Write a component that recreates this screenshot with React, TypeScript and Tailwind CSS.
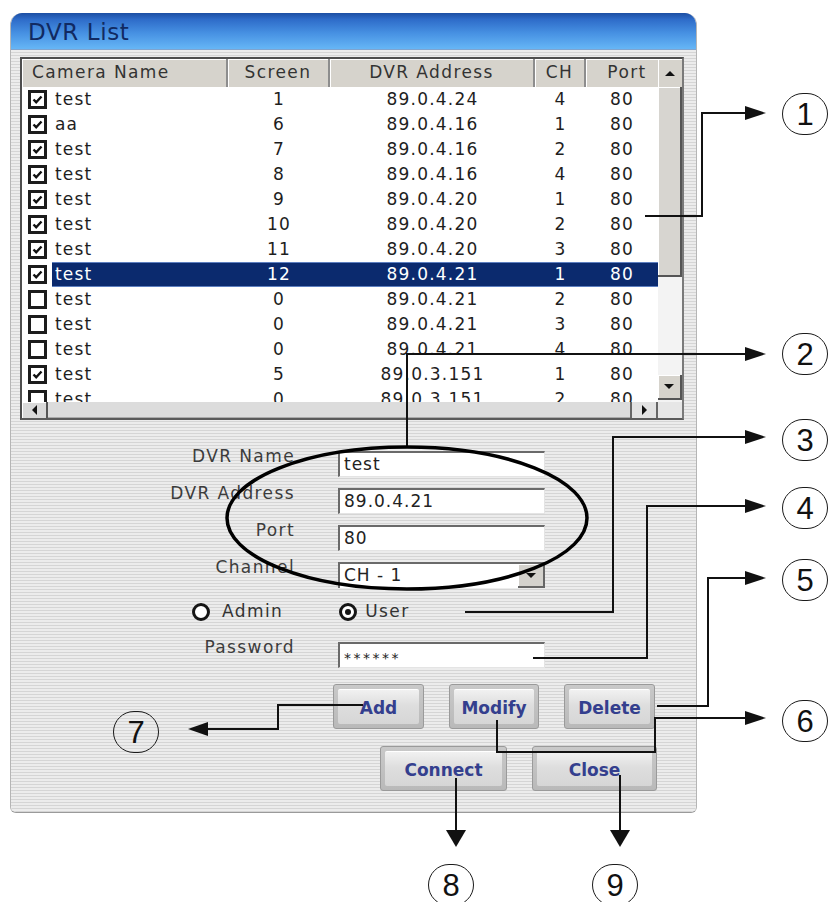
import React from 'react';

type Row = { on: boolean; name: string; screen: string; addr: string; ch: string; port: string };

const rows: Row[] = [
  { on: true, name: 'test', screen: '1', addr: '89.0.4.24', ch: '4', port: '80' },
  { on: true, name: 'aa', screen: '6', addr: '89.0.4.16', ch: '1', port: '80' },
  { on: true, name: 'test', screen: '7', addr: '89.0.4.16', ch: '2', port: '80' },
  { on: true, name: 'test', screen: '8', addr: '89.0.4.16', ch: '4', port: '80' },
  { on: true, name: 'test', screen: '9', addr: '89.0.4.20', ch: '1', port: '80' },
  { on: true, name: 'test', screen: '10', addr: '89.0.4.20', ch: '2', port: '80' },
  { on: true, name: 'test', screen: '11', addr: '89.0.4.20', ch: '3', port: '80' },
  { on: true, name: 'test', screen: '12', addr: '89.0.4.21', ch: '1', port: '80' },
  { on: false, name: 'test', screen: '0', addr: '89.0.4.21', ch: '2', port: '80' },
  { on: false, name: 'test', screen: '0', addr: '89.0.4.21', ch: '3', port: '80' },
  { on: false, name: 'test', screen: '0', addr: '89.0.4.21', ch: '4', port: '80' },
  { on: true, name: 'test', screen: '5', addr: '89.0.3.151', ch: '1', port: '80' },
  { on: false, name: 'test', screen: '0', addr: '89.0.3.151', ch: '2', port: '80' },
];

const SELECTED = 7;

// circled callout numbers, placed over the picture
const marks = [
  { n: '1', cls: 'left-[782px] top-[93px]' },
  { n: '2', cls: 'left-[782px] top-[333px]' },
  { n: '3', cls: 'left-[782px] top-[419px]' },
  { n: '4', cls: 'left-[782px] top-[487px]' },
  { n: '5', cls: 'left-[782px] top-[559px]' },
  { n: '6', cls: 'left-[782px] top-[700px]' },
  { n: '7', cls: 'left-[113px] top-[711px]' },
  { n: '8', cls: 'left-[428px] top-[864px]' },
  { n: '9', cls: 'left-[592px] top-[864px]' },
];

function Check({ on }: { on: boolean }) {
  return (
    <div className="w-[19px] h-[19px] border-[3px] border-[#1c1c1c] bg-white flex items-center justify-center">
      {on && (
        <svg width="11" height="11" viewBox="0 0 11 11">
          <polyline points="1.5,5.5 4.2,8.2 9.5,2.5" fill="none" stroke="#111" strokeWidth="2.4" />
        </svg>
      )}
    </div>
  );
}

function Arrow({ dir }: { dir: 'up' | 'down' | 'left' | 'right' }) {
  const pts = {
    up: '0,6 10,6 5,1',
    down: '0,1 10,1 5,6',
    left: '6,0 6,10 1,5',
    right: '1,0 1,10 6,5',
  }[dir];
  const vert = dir === 'up' || dir === 'down';
  return (
    <svg width={vert ? 10 : 7} height={vert ? 7 : 10} viewBox={vert ? '0 0 10 7' : '0 0 7 10'}>
      <polygon points={pts} fill="#111" />
    </svg>
  );
}

function Field({ label, children }: { label: string; children: React.ReactNode }) {
  return (
    <div className="flex h-[26px] items-start">
      <div className="w-[275px] text-right mt-[-6px] leading-[22px] text-[17px] tracking-[1.4px] text-[#3c3c3c]">{label}</div>
      <div className="ml-[43px]">{children}</div>
    </div>
  );
}

function Input({ value, small }: { value: string; small?: boolean }) {
  return (
    <div className={`w-[207px] h-[26px] bg-white border-t-2 border-l-2 border-t-[#6a6a6a] border-l-[#6a6a6a] border-b border-r border-b-[#e4e4e4] border-r-[#e4e4e4] pl-[4px] flex items-center text-[#222] ${small ? 'text-[14px] tracking-[2.5px] pt-[5px]' : 'text-[17px] tracking-[1px]'}`}>
      {value}
    </div>
  );
}

function Btn({ label, w }: { label: string; w: string }) {
  return (
    <div className={`${w} h-[45px] rounded-[3px] border border-[#9a9a9a] bg-[linear-gradient(180deg,#c9c9c9_0%,#b9b9b9_100%)] p-[4px]`}>
      <div className="w-full h-full rounded-[2px] bg-[linear-gradient(180deg,#f1f1f1_0%,#dedede_45%,#d6d6d6_100%)] border-t border-t-white flex items-center justify-center pt-[3px] text-[17px] font-bold text-[#343f8e] font-['DejaVu_Sans',sans-serif]">
        {label}
      </div>
    </div>
  );
}

export default function App() {
  return (
    <div className="relative w-[829px] h-[902px] bg-white overflow-hidden font-['DejaVu_Sans',sans-serif]">
      <div className="ml-[10px] mt-[13px] w-[687px] h-[800px] flex flex-col rounded-t-[12px] rounded-b-[6px] overflow-hidden border-x border-b border-x-[#b5b5b5] border-b-[#9a9a9a]">
        {/* title bar */}
        <div className="h-[37px] shrink-0 bg-[linear-gradient(180deg,#1d4fa3_0%,#2e6cc9_18%,#4690e2_55%,#66b6f6_100%)] border-b border-b-[#7fa4cf] pl-[17px] flex items-center">
          <span className="text-[23px] tracking-[0.6px] text-[#112a62] leading-none mt-[2px]">DVR List</span>
        </div>

        {/* body */}
        <div className="flex-1 flex flex-col pl-[9px] pt-[7px] bg-[repeating-linear-gradient(180deg,#ececec_0px,#ececec_2px,#d5d5d5_2px,#d5d5d5_3px)]">
          {/* list view */}
          <div className="w-[664px] h-[363px] border-2 border-t-[#4e4e4e] border-l-[#4e4e4e] border-r-[#7a7a7a] border-b-[#5a5a5a] flex flex-col bg-white">
            <div className="flex h-[343px]">
              <div className="w-[636px] flex flex-col">
                <div className="h-[28px] flex bg-[#d6d3cc] text-[17px] tracking-[1.4px] text-[#333]">
                  <div className="w-[206px] pl-[10px] flex items-center border-r-2 border-r-[#8d8d8d] shadow-[inset_1px_1px_0_#fff]">Camera Name</div>
                  <div className="w-[102px] flex items-center justify-center border-r-2 border-r-[#8d8d8d] shadow-[inset_1px_1px_0_#fff]">Screen</div>
                  <div className="w-[205px] flex items-center justify-center border-r-2 border-r-[#8d8d8d] shadow-[inset_1px_1px_0_#fff]">DVR Address</div>
                  <div className="w-[51px] flex items-center justify-center border-r-2 border-r-[#8d8d8d] shadow-[inset_1px_1px_0_#fff]">CH</div>
                  <div className="w-[72px] flex items-center justify-center pl-[10px] shadow-[inset_1px_1px_0_#fff]">Port</div>
                </div>
                <div className="h-[315px] overflow-hidden">
                  {rows.map((r, i) => {
                    const sel = i === SELECTED;
                    return (
                      <div key={i} className="h-[25px] flex items-center text-[17px] tracking-[1.2px]">
                        <div className="w-[30px] pl-[6px] flex items-center">
                          <Check on={r.on} />
                        </div>
                        <div className={`flex h-full items-center ${sel ? 'bg-[#0b2a6e] text-white border-y border-y-[#5d7fc0]' : 'text-[#1e1e1e]'}`}>
                          <div className="w-[176px] pl-[3px]">{r.name}</div>
                          <div className="w-[102px] text-center">{r.screen}</div>
                          <div className="w-[205px] text-center">{r.addr}</div>
                          <div className="w-[51px] text-center">{r.ch}</div>
                          <div className="w-[72px] text-center">{r.port}</div>
                        </div>
                      </div>
                    );
                  })}
                </div>
              </div>
              {/* vertical scrollbar */}
              <div className="w-[24px] flex flex-col bg-[#f3f3f3]">
                <div className="h-[28px] bg-[#d6d3cc] flex items-center justify-center shadow-[inset_1px_1px_0_#fff]">
                  <Arrow dir="up" />
                </div>
                <div className="h-[190px] bg-[#d7d5d0] border-r-2 border-b-2 border-r-[#555] border-b-[#555] shadow-[inset_1px_1px_0_#fff]" />
                <div className="flex-1" />
                <div className="h-[25px] mb-[2px] bg-[#d6d3cc] border-r-2 border-b-2 border-r-[#555] border-b-[#555] shadow-[inset_1px_1px_0_#fff] flex items-center justify-center">
                  <Arrow dir="down" />
                </div>
              </div>
            </div>
            {/* horizontal scrollbar */}
            <div className="h-[16px] flex bg-[#d9d9d9]">
              <div className="w-[26px] border-r-2 border-r-[#555] shadow-[inset_1px_1px_0_#fff] flex items-center justify-center">
                <Arrow dir="left" />
              </div>
              <div className="flex-1 bg-[#dcdcdc] border-b border-b-[#aaa]" />
              <div className="w-[28px] bg-[#e2e2e2] border-x-2 border-x-[#666] flex items-center justify-center">
                <Arrow dir="right" />
              </div>
              <div className="w-[24px] bg-[#e6e6e6]" />
            </div>
          </div>

          {/* form */}
          <div className="mt-[31px] flex flex-col gap-[11px]">
            <Field label="DVR Name">
              <Input value="test" />
            </Field>
            <Field label="DVR Address">
              <Input value="89.0.4.21" />
            </Field>
            <Field label="Port">
              <Input value="80" />
            </Field>
            <Field label="Channel">
              <div className="w-[207px] h-[26px] bg-white border-t-2 border-l-2 border-t-[#6a6a6a] border-l-[#6a6a6a] flex">
                <div className="flex-1 pl-[4px] flex items-center text-[17px] tracking-[1px] text-[#222]">CH - 1</div>
                <div className="w-[27px] bg-[#d4d2cd] border-r-2 border-b-2 border-r-[#666] border-b-[#666] shadow-[inset_1px_1px_0_#fff] flex items-center justify-center">
                  <Arrow dir="down" />
                </div>
              </div>
            </Field>
          </div>

          <div className="mt-[10px] h-[28px] flex items-center text-[17px] tracking-[1.4px] text-[#333]">
            <div className="ml-[172px] w-[18px] h-[18px] rounded-full border-[3px] border-[#151515] bg-white" />
            <span className="ml-[12px]">Admin</span>
            <div className="ml-[56px] w-[18px] h-[18px] rounded-full border-[3px] border-[#151515] bg-white flex items-center justify-center">
              <div className="w-[6px] h-[6px] rounded-full bg-[#151515]" />
            </div>
            <span className="ml-[8px]">User</span>
          </div>

          <div className="mt-[16px]">
            <Field label="Password">
              <Input value="******" small />
            </Field>
          </div>

          <div className="mt-[16px] ml-[313px] flex gap-[25px]">
            <Btn label="Add" w="w-[91px]" />
            <Btn label="Modify" w="w-[90px]" />
            <Btn label="Delete" w="w-[91px]" />
          </div>
          <div className="mt-[17px] ml-[360px] flex gap-[25px]">
            <Btn label="Connect" w="w-[127px]" />
            <Btn label="Close" w="w-[125px]" />
          </div>
        </div>
      </div>

      {/* annotation lines, oval and arrows drawn over the dialog */}
      <svg className="absolute left-0 top-0 pointer-events-none" width="829" height="902" viewBox="0 0 829 902">
        <g fill="none" stroke="#111" strokeWidth="2">
          <polyline points="645,216 702,216 702,113 750,113" />
          <polyline points="407,447 407,354 750,354" />
          <polyline points="465,612 613,612 613,437 750,437" />
          <polyline points="533,658 647,658 647,506 750,506" />
          <polyline points="657,706 708,706 708,578 750,578" />
          <polyline points="497,720 497,752 655,752 655,718 750,718" />
          <polyline points="363,705 278,705 278,729 205,729" />
          <polyline points="456,778 456,834" />
          <polyline points="620,775 620,834" />
        </g>
        <g fill="#111">
          <polygon points="766,113 745,106 745,120" />
          <polygon points="766,354 745,347 745,361" />
          <polygon points="766,437 745,430 745,444" />
          <polygon points="766,506 745,499 745,513" />
          <polygon points="766,578 745,571 745,585" />
          <polygon points="766,718 745,711 745,725" />
          <polygon points="188,729 208,722 208,736" />
          <polygon points="456,847 446,830 466,830" />
          <polygon points="620,847 610,830 630,830" />
        </g>
        <ellipse cx="407" cy="518" rx="180" ry="71" fill="none" stroke="#000" strokeWidth="3.5" />
      </svg>

      {marks.map((m) => (
        <div
          key={m.n}
          className={`absolute ${m.cls} w-[46px] h-[42px] rounded-full border-[1.5px] border-[#1a1a1a] flex items-center justify-center text-[31px] leading-none text-[#111] font-['Liberation_Sans',sans-serif]`}
        >
          {m.n}
        </div>
      ))}
    </div>
  );
}
